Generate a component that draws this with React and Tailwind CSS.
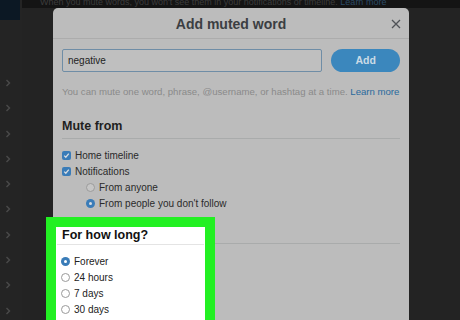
import React from 'react';

const font = { fontFamily: '"Liberation Sans", Arial, sans-serif' };

const Chevron = () => (
  <svg width="6" height="8" viewBox="0 0 6 8" className="block">
    <polyline points="1.5,1 4.5,4 1.5,7" fill="none" stroke="#4a4a4a" strokeWidth="1.4" />
  </svg>
);

const Checkbox = () => (
  <span className="w-[9px] h-[9px] rounded-[2px] bg-[#3a7cb8] flex items-center justify-center shrink-0">
    <svg width="7" height="7" viewBox="0 0 7 7">
      <polyline points="1.2,3.6 2.8,5.2 5.8,1.6" fill="none" stroke="#d8dde2" strokeWidth="1.3" />
    </svg>
  </span>
);

const Radio = ({ on, light }) =>
  on ? (
    <span className="w-[9px] h-[9px] rounded-full bg-[#3a7cb8] flex items-center justify-center shrink-0">
      <span className={`w-[3px] h-[3px] rounded-full ${light ? 'bg-white' : 'bg-[#d8dde2]'}`} />
    </span>
  ) : (
    <span
      className={`w-[9px] h-[9px] rounded-full border shrink-0 ${
        light ? 'border-[#9a9a9a] bg-white' : 'border-[#9c9c9c] bg-[#c6c6c6]'
      }`}
    />
  );

const Row = ({ children, indent }) => (
  <div className={`h-[16px] flex items-center gap-[4px] ${indent ? 'pl-[24px]' : ''}`}>{children}</div>
);

const App = () => {
  const chevrons = Array.from({ length: 10 });

  return (
    <div className="relative w-[460px] h-[320px] overflow-hidden bg-[#232323] flex" style={font}>
      {/* left nav column */}
      <div className="w-[22px] shrink-0 bg-[#242424] flex flex-col">
        <div className="w-[20px] h-[20px] bg-[#0c1824]" />
        <div className="flex flex-col pt-[59px] gap-[17.3px] pl-[5px]">
          {chevrons.map((_, i) => (
            <Chevron key={i} />
          ))}
        </div>
      </div>

      {/* page behind the dialog */}
      <div className="flex-1 flex flex-col">
        <div className="h-[8px] bg-[#141414] overflow-hidden pl-[18px]">
          <p className="text-[9px] leading-[9px] -mt-[2px] text-[#3c3c3c] whitespace-nowrap">
            When you mute words, you won't see them in your notifications or timeline. <span className="text-[#2b4a66]">Learn more</span>
          </p>
        </div>
      </div>

      {/* dialog */}
      <div className="absolute left-[53px] top-[8px] w-[356px] h-[330px] bg-[#bcbcbc] rounded-t-[5px] flex flex-col">
        <div className="h-[31px] pt-[3px] border-b border-[#acacac] flex items-center justify-center relative">
          <h2 className="text-[14px] font-bold text-[#3b3e42]">Add muted word</h2>
          <span className="absolute right-[8px] top-[11px]">
            <svg width="10" height="10" viewBox="0 0 10 10">
              <path d="M1 1L9 9M9 1L1 9" stroke="#505358" strokeWidth="1.3" />
            </svg>
          </span>
        </div>

        <div className="px-[9px] flex flex-col">
          <div className="mt-[10px] flex gap-[9px]">
            <div className="w-[262px] h-[23px] border border-[#6f8da6] rounded-[2px] bg-[#bfbfbf] flex items-center pl-[5px]">
              <span className="text-[10px] text-[#1e1e1e]">negative</span>
            </div>
            <button className="w-[69px] h-[23px] rounded-full bg-[#3b87bd] text-[10.5px] font-bold text-[#cbdbe6]">
              Add
            </button>
          </div>

          <p className="mt-[13px] text-[9.6px] leading-[14px] text-[#8a8a8a] whitespace-nowrap">
            You can mute one word, phrase, @username, or hashtag at a time.{' '}
            <span className="text-[#2a6a9c]">Learn more</span>
          </p>

          <div className="mt-[18px] border-b border-[#a9abab] pb-[3px]">
            <h3 className="text-[12.5px] leading-[18px] font-bold text-[#1f1f1f]">Mute from</h3>
          </div>

          <div className="mt-[8px] flex flex-col text-[10px] text-[#2a2a2a]">
            <Row>
              <Checkbox />
              <span>Home timeline</span>
            </Row>
            <Row>
              <Checkbox />
              <span>Notifications</span>
            </Row>
            <Row indent>
              <Radio />
              <span>From anyone</span>
            </Row>
            <Row indent>
              <Radio on />
              <span>From people you don't follow</span>
            </Row>
          </div>

          {/* highlighted "For how long?" section */}
          <div className="mt-[6px] flex items-start">
            <div className="-ml-[16px] w-[169px] h-[120px] border-[10px] border-[#22f022] bg-white shrink-0">
              <div className="mx-[1px] border-b border-[#e4e4e4] pl-[5px] pt-[1px] pb-[2px]">
                <h3 className="text-[12.5px] leading-[14px] font-bold text-[#111]">For how long?</h3>
              </div>
              <div className="mt-[8px] pl-[5px] flex flex-col text-[10px] text-[#222]">
                <Row>
                  <Radio on light />
                  <span>Forever</span>
                </Row>
                <Row>
                  <Radio light />
                  <span>24 hours</span>
                </Row>
                <Row>
                  <Radio light />
                  <span>7 days</span>
                </Row>
                <Row>
                  <Radio light />
                  <span>30 days</span>
                </Row>
              </div>
            </div>
            <div className="flex-1 h-[27px] border-b border-[#a9abab]" />
          </div>
        </div>
      </div>
    </div>
  );
};

export default App;
